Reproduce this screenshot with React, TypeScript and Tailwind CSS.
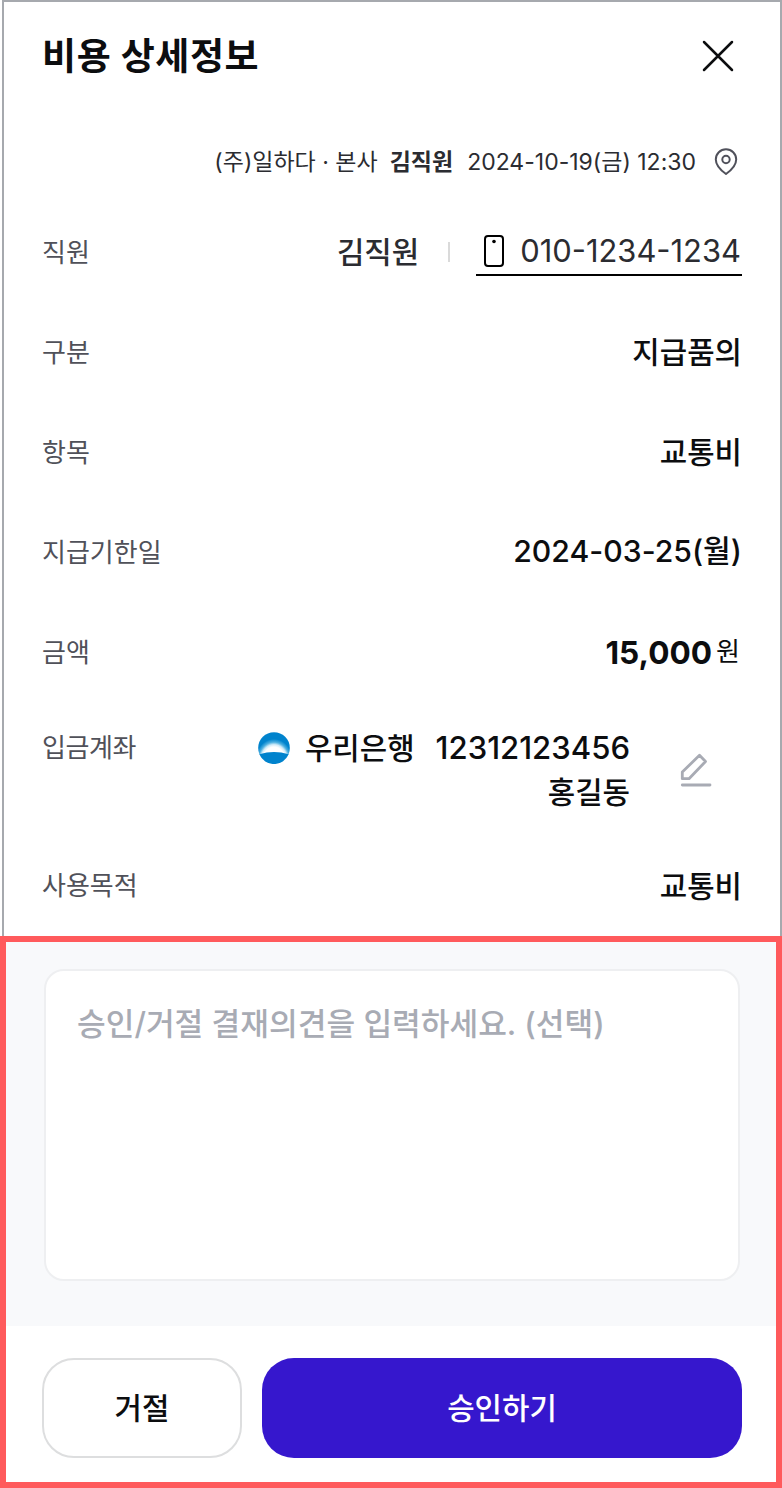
import type { ReactNode } from 'react'

function Row({ label, children }: { label: string; children: ReactNode }) {
  return (
    <div className="flex h-[100px] items-center justify-between">
      <Label>{label}</Label>
      {children}
    </div>
  )
}

function Label({ children }: { children: ReactNode }) {
  return <span className="pt-[2px] text-[26px] leading-10 text-[#505159]">{children}</span>
}

function Value({ children }: { children: ReactNode }) {
  return <span className="text-[29.8px] leading-[44px] font-medium">{children}</span>
}

function PinIcon() {
  return (
    <svg width="24" height="28" viewBox="0 0 24 28" fill="none" stroke="#50515b" strokeWidth="2">
      <path d="M12 26C8.500 23.500 1.800 17.500 1.800 11.500a10.200 10.200 0 0 1 20.400 0C22.200 17.500 15.500 23.500 12 26Z" strokeLinejoin="round" />
      <circle cx="12" cy="11.500" r="3.700" />
    </svg>
  )
}

function PhoneIcon() {
  return (
    <svg width="20" height="32" viewBox="0 0 20 32" fill="none" stroke="#000" strokeWidth="2">
      <rect x="1" y="1" width="18" height="30" rx="3" />
      <circle cx="10" cy="6.500" r="1.800" fill="#000" stroke="none" />
    </svg>
  )
}

function BankLogo() {
  return (
    <svg width="32" height="32" viewBox="0 0 32 32">
      <defs>
        <radialGradient id="glow" cx="0" cy="0" r="1" gradientUnits="userSpaceOnUse" gradientTransform="translate(16 27) scale(18 20)">
          <stop offset="0.600" stopColor="#fff" />
          <stop offset="0.720" stopColor="#d0ebf8" />
          <stop offset="0.840" stopColor="#4eb0e0" />
          <stop offset="1" stopColor="#0083cd" />
        </radialGradient>
      </defs>
      <circle cx="16" cy="16" r="15.800" fill="url(#glow)" />
      <path d="M1.400 22.300Q16 17.500 30.600 22.300A15.800 15.800 0 0 1 1.400 22.300Z" fill="#0083cd" />
    </svg>
  )
}

function EditIcon() {
  return (
    <svg width="32" height="34" viewBox="0 0 32 34" fill="none" stroke="#a8abb4" strokeWidth="2.800" strokeLinejoin="round" strokeLinecap="round">
      <path d="M2.300 25.700V19L19.500 2.300L25.500 8.500L9 25.700Z" />
      <path d="M2.300 32H30" />
    </svg>
  )
}

export default function App() {
  return (
    <div className="flex h-[1488px] w-[782px] flex-col bg-white font-['Inter','Noto_Sans_CJK_KR',sans-serif] text-[#0c0d0f]">
      <section className="ml-0.5 h-[936px] border-x-2 border-t-2 border-[#a6a9ae] px-[38px]">
        <header className="flex h-[108px] items-center justify-between pr-[8px]">
          <h1 className="pt-[2px] text-[37px] font-bold tracking-[0.6px]">비용 상세정보</h1>
          <button aria-label="닫기">
            <svg width="32" height="32" viewBox="0 0 32 32" stroke="#0c0d0f" strokeWidth="2.500" strokeLinecap="round">
              <path d="M2 2 30 30M30 2 2 30" />
            </svg>
          </button>
        </header>
        <div className="flex h-[92px] items-center justify-end pt-[12px] pr-[4px] text-[23px] text-[#2b2c31]">
          <span>(주)일하다 · 본사</span>
          <b className="mr-[14px] ml-[12px]">김직원</b>
          <span>2024-10-19(금) 12:30</span>
          <span className="ml-[18px]"><PinIcon /></span>
        </div>

        <Row label="직원">
          <div className="flex items-center text-[#2b2c31]">
            <Value>김직원</Value>
            <span className="mr-[26px] ml-[29px] h-5 w-0.5 bg-[#dadada]" />
            <a className="flex h-[48px] items-center border-b-2 border-black pr-[1px] pl-[8px]">
              <PhoneIcon />
              <span className="ml-[16px] pt-px text-[30.9px]">010-1234-1234</span>
            </a>
          </div>
        </Row>
        <Row label="구분"><Value>지급품의</Value></Row>
        <Row label="항목"><Value>교통비</Value></Row>
        <Row label="지급기한일">
          <span className="text-[30.2px] font-medium">2024-03-25(월)</span>
        </Row>
        <Row label="금액">
          <span className="flex items-center pr-[2px]">
            <b className="pt-px text-[31.6px]">15,000</b>
            <span className="ml-[4px] text-[26px]">원</span>
          </span>
        </Row>
        <div className="flex h-[136px] justify-between pt-[24px]">
          <span className="pt-[2px] tracking-[-0.400px]"><Label>입금계좌</Label></span>
          <div className="flex pr-[30px]">
            <span className="mt-[6px] mr-[15px]"><BankLogo /></span>
            <div className="flex flex-col items-end">
              <div className="flex items-center">
                <Value>우리은행</Value>
                <span className="ml-[21px] text-[31.1px] leading-[44px] font-medium">12312123456</span>
              </div>
              <Value>홍길동</Value>
            </div>
            <button aria-label="계좌 수정" className="ml-[50px] h-[34px] pt-[27px]">
              <EditIcon />
            </button>
          </div>
        </div>
        <div className="flex justify-between pt-[26px]">
          <Label>사용목적</Label>
          <Value>교통비</Value>
        </div>
      </section>

      <section className="flex flex-1 flex-col border-6 border-[#ff5a5c]">
        <div className="h-[384px] bg-[#f8f9fb] pt-[27px] pr-[36px] pl-[38px]">
          <textarea
            placeholder="승인/거절 결재의견을 입력하세요. (선택)"
            className="block h-[312px] w-full resize-none rounded-[20px] border-2 border-[#eeeff1] bg-white px-[31px] py-[30px] text-[31.2px] leading-[46px] font-medium outline-none placeholder:text-[#a8abb4]"
          />
        </div>
        <div className="flex gap-[20px] pt-[32px] pr-[34px] pl-[36px]">
          <button className="h-[100px] w-[200px] rounded-[32px] border-2 border-[#dddedf] text-[29.8px] font-medium">
            거절
          </button>
          <button className="h-[100px] flex-1 rounded-[32px] bg-[#3617cd] text-[29.8px] font-medium text-white">
            승인하기
          </button>
        </div>
      </section>
    </div>
  )
}
